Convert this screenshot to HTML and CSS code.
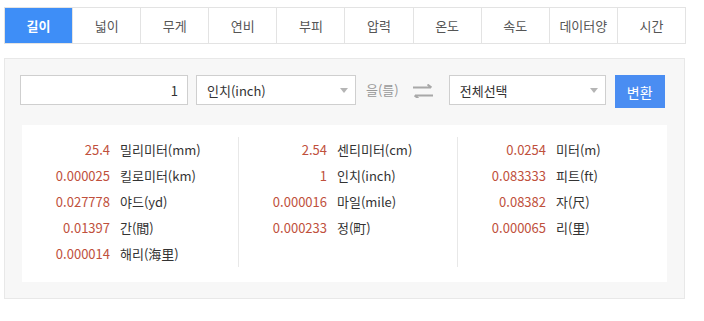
FILE: index.html
```html
<!DOCTYPE html>
<html lang="ko">
  <head>
    <meta charset="UTF-8" />
    <meta name="viewport" content="width=device-width, initial-scale=1.0" />
    <title>단위변환</title>
    <link rel="stylesheet" href="styles.css">
  </head>
  <body>
    <div class="converter">
      <ul class="tabs">
        <li class="tab active">길이</li>
        <li class="tab">넓이</li>
        <li class="tab">무게</li>
        <li class="tab">연비</li>
        <li class="tab">부피</li>
        <li class="tab">압력</li>
        <li class="tab">온도</li>
        <li class="tab">속도</li>
        <li class="tab">데이터양</li>
        <li class="tab">시간</li>
      </ul>

      <div class="panel">
        <div class="form-row">
          <input class="amount" type="text" value="1" />
          <span class="select-wrap unit-from">
            <select>
              <option>인치(inch)</option>
            </select>
          </span>
          <span class="particle">을(를)</span>
          <span class="swap">
            <svg width="20" height="14" viewBox="0 0 20 14">
              <path d="M0 3.5H18M14.5 0.5L18.5 3.5" stroke="#a8a8a8" stroke-width="2" fill="none" />
              <path d="M2 11.5H20M5.5 14.5L1.5 11.5" stroke="#a8a8a8" stroke-width="2" fill="none" />
            </svg>
          </span>
          <span class="select-wrap unit-to">
            <select>
              <option>전체선택</option>
            </select>
          </span>
          <button class="convert" type="button">변환</button>
        </div>

        <div class="results">
          <div class="col">
            <div class="row"><span class="num">25.4</span><span class="unit">밀리미터(mm)</span></div>
            <div class="row"><span class="num">0.000025</span><span class="unit">킬로미터(km)</span></div>
            <div class="row"><span class="num">0.027778</span><span class="unit">야드(yd)</span></div>
            <div class="row"><span class="num">0.01397</span><span class="unit">간(間)</span></div>
            <div class="row"><span class="num">0.000014</span><span class="unit">해리(海里)</span></div>
          </div>
          <div class="col">
            <div class="row"><span class="num">2.54</span><span class="unit">센티미터(cm)</span></div>
            <div class="row"><span class="num">1</span><span class="unit">인치(inch)</span></div>
            <div class="row"><span class="num">0.000016</span><span class="unit">마일(mile)</span></div>
            <div class="row"><span class="num">0.000233</span><span class="unit">정(町)</span></div>
          </div>
          <div class="col">
            <div class="row"><span class="num">0.0254</span><span class="unit">미터(m)</span></div>
            <div class="row"><span class="num">0.083333</span><span class="unit">피트(ft)</span></div>
            <div class="row"><span class="num">0.08382</span><span class="unit">자(尺)</span></div>
            <div class="row"><span class="num">0.000065</span><span class="unit">리(里)</span></div>
          </div>
        </div>
      </div>
    </div>
  </body>
</html>
```

FILE: styles.css
```css
body {
  margin: 0;
  background: #fff;
  font-family: "Noto Sans CJK KR", "Noto Sans", sans-serif;
  font-size: 13px;
  color: #333;
}

.converter {
  width: 682px;
  padding: 7px 0 0 4px;
}

.tabs {
  display: flex;
  margin: 0;
  padding: 0;
  list-style: none;
  border: 1px solid #e3e3e3;
  border-right: 0;
}

.tab {
  flex: 1;
  height: 35px;
  line-height: 35px;
  text-align: center;
  border-right: 1px solid #e3e3e3;
  color: #555;
}

.tab.active {
  background: #3e8ef7;
  color: #fff;
  font-weight: bold;
}

.panel {
  margin-top: 14px;
  width: 679px;
  height: 239px;
  border: 1px solid #e8e8e8;
  background: #f7f7f7;
}

.form-row {
  display: flex;
  align-items: flex-start;
  padding: 16px 0 0 15px;
}

.amount {
  box-sizing: border-box;
  width: 168px;
  height: 30px;
  padding: 0 9px;
  border: 1px solid #cfcfcf;
  background: #fff;
  text-align: right;
  font: inherit;
  color: #333;
  outline: none;
}

.select-wrap {
  position: relative;
  display: block;
  margin-left: 8px;
}

.select-wrap select {
  box-sizing: border-box;
  height: 30px;
  padding: 0 10px;
  border: 1px solid #cfcfcf;
  background: #fff;
  font: inherit;
  color: #333;
  appearance: none;
  -webkit-appearance: none;
  border-radius: 0;
  outline: none;
}

.select-wrap::after {
  content: "";
  position: absolute;
  right: 8px;
  top: 13px;
  border-left: 4px solid transparent;
  border-right: 4px solid transparent;
  border-top: 5px solid #b5b5b5;
}

.unit-from select {
  width: 160px;
}

.unit-to select {
  width: 157px;
}

.particle {
  margin-left: 10px;
  line-height: 30px;
  color: #999;
}

.swap {
  display: block;
  margin: 8px 0 0 14px;
  height: 14px;
}

.unit-to {
  margin-left: 16px;
}

.convert {
  margin-left: 9px;
  width: 50px;
  height: 33px;
  border: 0;
  background: #4a8df2;
  color: #fff;
  font: inherit;
  font-size: 14px;
  padding: 0;
}

.results {
  display: grid;
  grid-template-columns: 216px 219px 1fr;
  margin: 17px 17px 0 17px;
  height: 157px;
  background: #fff;
}

.col {
  margin-top: 12px;
  height: 130px;
}

.col + .col {
  border-left: 1px solid #e8e8e8;
}

.row {
  display: flex;
  height: 26px;
  line-height: 26px;
}

.num {
  width: 88px;
  text-align: right;
  color: #c0503c;
}

.unit {
  margin-left: 10px;
  color: #333;
}
```
